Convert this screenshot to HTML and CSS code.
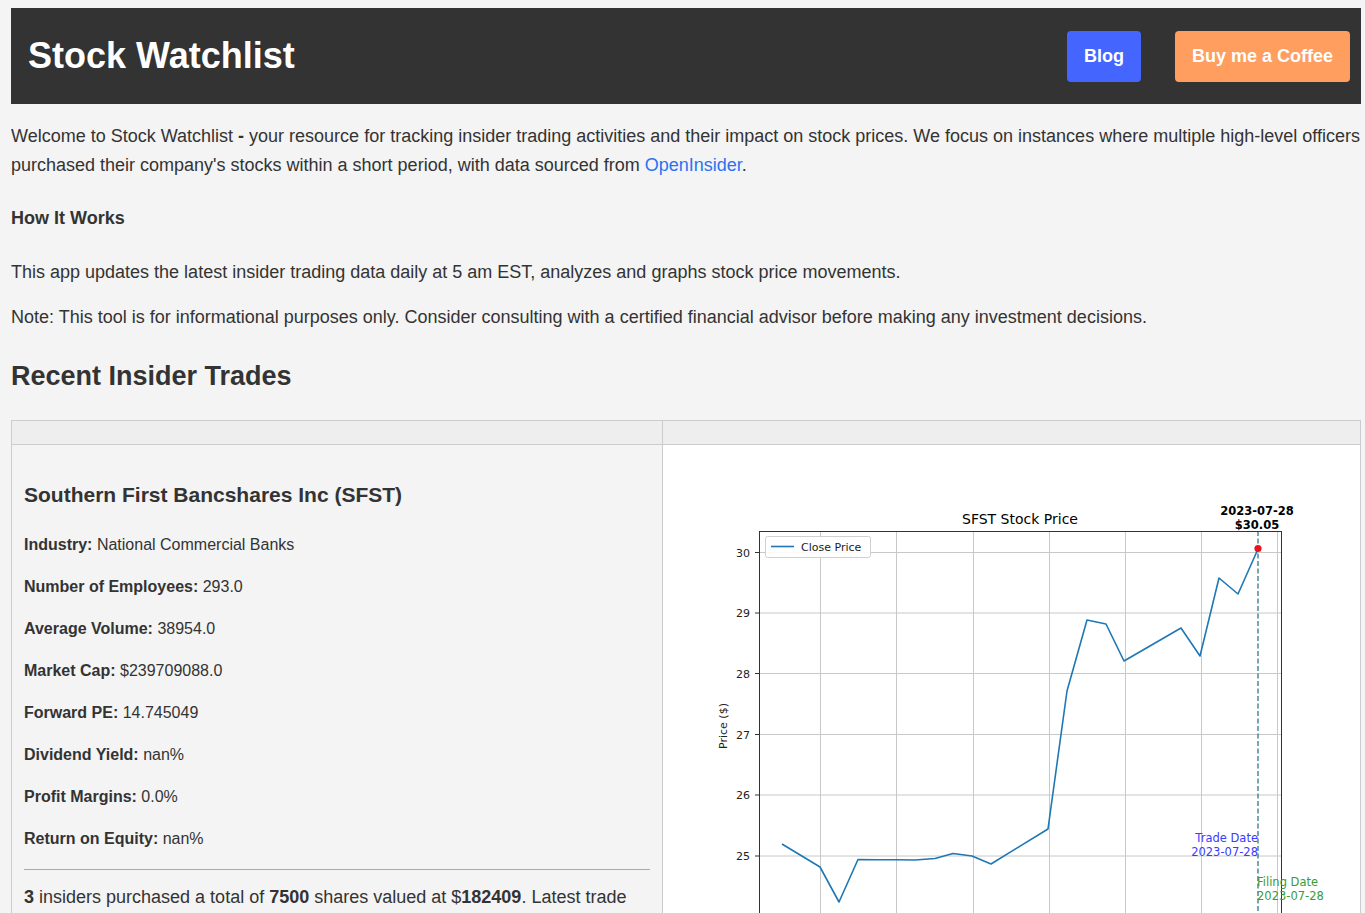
FILE: index.html
```html
<!DOCTYPE html>
<html lang="en">
<head>
<meta charset="utf-8">
<title>Stock Watchlist</title>
<link rel="stylesheet" href="styles.css">
</head>
<body>
<header class="topbar">
  <h1 class="brand">Stock Watchlist</h1>
  <nav class="actions">
    <a class="btn btn-blog" href="#">Blog</a>
    <a class="btn btn-coffee" href="#">Buy me a Coffee</a>
  </nav>
</header>

<main>
  <p class="intro lead">Welcome to Stock Watchlist <b>-</b> your resource for tracking insider trading activities and their impact on stock prices. We focus on instances where multiple high-level officers purchased their company's stocks within a short period, with data sourced from <a class="link" href="#">OpenInsider</a>.</p>
  <p class="how">How It Works</p>
  <p class="intro intro-after">This app updates the latest insider trading data daily at 5 am EST, analyzes and graphs stock price movements.</p>
  <p class="intro">Note: This tool is for informational purposes only. Consider consulting with a certified financial advisor before making any investment decisions.</p>

  <h2 class="section-title">Recent Insider Trades</h2>

  <table class="trades">
    <colgroup><col class="col-info"><col class="col-chart"></colgroup>
    <thead><tr><th></th><th></th></tr></thead>
    <tbody>
      <tr>
        <td class="info">
          <h3 class="company">Southern First Bancshares Inc (SFST)</h3>
          <p class="fact"><b>Industry:</b> National Commercial Banks</p>
          <p class="fact"><b>Number of Employees:</b> 293.0</p>
          <p class="fact"><b>Average Volume:</b> 38954.0</p>
          <p class="fact"><b>Market Cap:</b> $239709088.0</p>
          <p class="fact"><b>Forward PE:</b> 14.745049</p>
          <p class="fact"><b>Dividend Yield:</b> nan%</p>
          <p class="fact"><b>Profit Margins:</b> 0.0%</p>
          <p class="fact"><b>Return on Equity:</b> nan%</p>
          <hr class="divider">
          <p class="summary"><b>3</b> insiders purchased a total of <b>7500</b> shares valued at $<b>182409</b>. Latest trade was made on 2023-07-28 and filed on 2023-07-28.</p>
        </td>
        <td class="chart">
          <svg class="chart-svg" width="697" height="520" viewBox="663 445 697 520" xmlns="http://www.w3.org/2000/svg">
            <rect x="663" y="445" width="697" height="520" fill="#fff"/>
            <text x="1020" y="524" font-size="14" text-anchor="middle" fill="#000" font-family="DejaVu Sans, sans-serif">SFST Stock Price</text>
            <text x="1257" y="515" font-size="11.5" font-weight="bold" text-anchor="middle" fill="#000" font-family="DejaVu Sans, sans-serif">2023-07-28</text>
            <text x="1257" y="529" font-size="11.5" font-weight="bold" text-anchor="middle" fill="#000" font-family="DejaVu Sans, sans-serif">$30.05</text>
            <g stroke="#c8c8c8" stroke-width="1">
              <line x1="820.5" y1="531" x2="820.5" y2="965"/>
              <line x1="896.5" y1="531" x2="896.5" y2="965"/>
              <line x1="973.5" y1="531" x2="973.5" y2="965"/>
              <line x1="1049.5" y1="531" x2="1049.5" y2="965"/>
              <line x1="1125.5" y1="531" x2="1125.5" y2="965"/>
              <line x1="1201.5" y1="531" x2="1201.5" y2="965"/>
              <line x1="1277.5" y1="531" x2="1277.5" y2="965"/>
              <line x1="759" y1="552.5" x2="1281" y2="552.5"/>
              <line x1="759" y1="613" x2="1281" y2="613"/>
              <line x1="759" y1="673.5" x2="1281" y2="673.5"/>
              <line x1="759" y1="734.5" x2="1281" y2="734.5"/>
              <line x1="759" y1="795" x2="1281" y2="795"/>
              <line x1="759" y1="856" x2="1281" y2="856"/>
              <line x1="759" y1="916.5" x2="1281" y2="916.5"/>
            </g>
            <g stroke="#333" stroke-width="1">
              <line x1="755" y1="552.5" x2="759" y2="552.5"/>
              <line x1="755" y1="613" x2="759" y2="613"/>
              <line x1="755" y1="673.5" x2="759" y2="673.5"/>
              <line x1="755" y1="734.5" x2="759" y2="734.5"/>
              <line x1="755" y1="795" x2="759" y2="795"/>
              <line x1="755" y1="856" x2="759" y2="856"/>
              <line x1="755" y1="916.5" x2="759" y2="916.5"/>
            </g>
            <g font-size="11" text-anchor="end" fill="#222" font-family="DejaVu Sans, sans-serif">
              <text x="750" y="556.5">30</text>
              <text x="750" y="617">29</text>
              <text x="750" y="677.5">28</text>
              <text x="750" y="738.5">27</text>
              <text x="750" y="799">26</text>
              <text x="750" y="860">25</text>
              <text x="750" y="920.5">24</text>
            </g>
            <text x="727" y="726" font-size="11" text-anchor="middle" fill="#222" font-family="DejaVu Sans, sans-serif" transform="rotate(-90 727 726)">Price ($)</text>
            <polyline fill="none" stroke="#1f77b4" stroke-width="1.6" stroke-linejoin="round" points="782,844 820,867 839,902 858,859.5 877,859.7 896,859.7 915,860 935,858.5 953,853.5 972,856 991,864 1048,829 1067,691 1087,620 1106,624 1124,661 1181,628 1200,656 1219,578 1238,594 1258,549"/>
            <line x1="1258" y1="531" x2="1258" y2="965" stroke="#2f7a84" stroke-width="1.3" stroke-dasharray="5,2.5"/>
            <circle cx="1258" cy="548.5" r="3.6" fill="#e8141c"/>
            <rect x="759.5" y="531.5" width="522" height="440" fill="none" stroke="#333" stroke-width="1"/>
            <rect x="765.5" y="536.5" width="105" height="21" rx="2" fill="#fff" fill-opacity="0.9" stroke="#d0d0d0"/>
            <line x1="771" y1="546.5" x2="794" y2="546.5" stroke="#1f77b4" stroke-width="1.6"/>
            <text x="801" y="550.5" font-size="11" fill="#222" font-family="DejaVu Sans, sans-serif">Close Price</text>
            <g font-size="11.5" fill="#3a3aff" text-anchor="end" font-family="DejaVu Sans, sans-serif">
              <text x="1258" y="842">Trade Date</text>
              <text x="1258" y="856">2023-07-28</text>
            </g>
            <g font-size="11.5" fill="#3a9b3a" font-family="DejaVu Sans, sans-serif">
              <text x="1257" y="886">Filing Date</text>
              <text x="1257" y="900">2023-07-28</text>
            </g>
          </svg>
        </td>
      </tr>
    </tbody>
  </table>
</main>
</body>
</html>
```
FILE: styles.css
```css
html, body {
  background: #f4f4f4;
}
body {
  margin: 8px 4px 8px 11px;
  font-family: "Liberation Sans", Arial, sans-serif;
  color: #333;
}
.topbar {
  display: flex;
  align-items: center;
  justify-content: space-between;
  background: #333;
  height: 96px;
  padding: 0 11px 0 17px;
  box-sizing: border-box;
}
.brand {
  margin: 0;
  color: #fff;
  font-size: 36px;
  font-weight: bold;
  line-height: 40px;
}
.actions {
  display: flex;
  gap: 34px;
  align-items: center;
}
.btn {
  display: block;
  color: #fff;
  text-decoration: none;
  font-weight: bold;
  font-size: 18px;
  line-height: 21px;
  padding: 15px 17px;
  border-radius: 4px;
}
.btn-blog { background: #4466ff; }
.btn-coffee { background: #ff9e5e; }

.intro {
  font-size: 18px;
  line-height: 28.8px;
  margin: 16px 0;
}
.lead { margin-top: 18px; }
.intro-after { margin-top: 26px; }
.link {
  color: #2a73f0;
  text-decoration: none;
}
.how {
  font-size: 18px;
  font-weight: bold;
  line-height: 28.8px;
  margin: 24px 0 0;
}
.section-title {
  font-size: 27px;
  line-height: 31px;
  margin: 29px 0 28px;
}
.trades {
  width: 100%;
  border-collapse: collapse;
  table-layout: fixed;
}
.col-info { width: 651px; }
.trades th {
  background: #eee;
  border: 1px solid #ccc;
  height: 23px;
  padding: 0;
}
.trades td {
  border: 1px solid #ccc;
  vertical-align: top;
}
.info {
  background: #f4f4f4;
  padding: 12px;
}
.chart {
  background: #fff;
  padding: 0;
}
.chart-svg { display: block; }
.company {
  font-size: 21px;
  line-height: 24px;
  margin: 26px 0 25px;
}
.fact {
  font-size: 16px;
  line-height: 26px;
  margin: 0 0 16px;
}
.divider {
  border: 0;
  border-top: 1px solid #aaa;
  margin: 17px 0 13px;
}
.summary {
  font-size: 18px;
  line-height: 28.8px;
  margin: 0;
}
```
